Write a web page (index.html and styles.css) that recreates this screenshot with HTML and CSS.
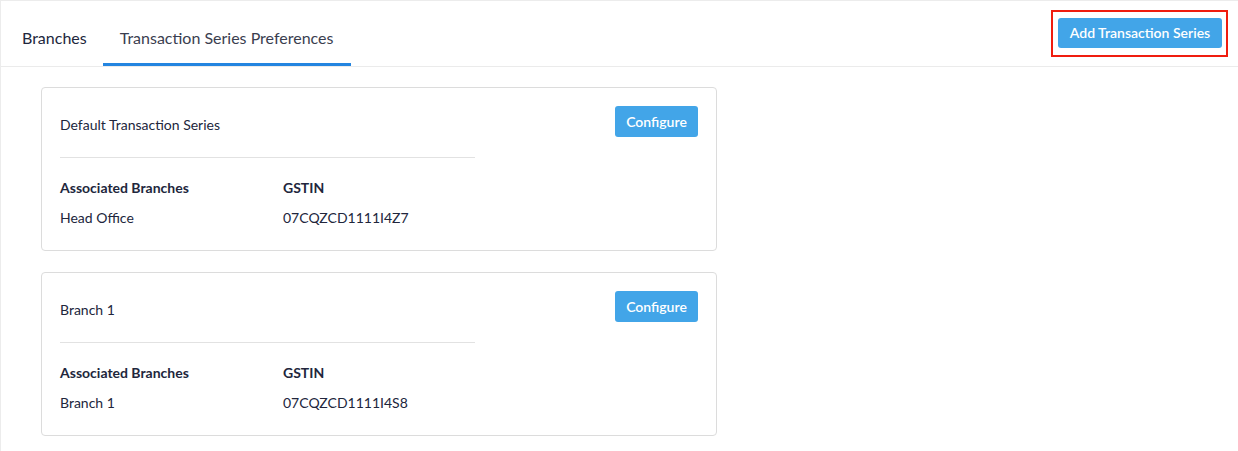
FILE: index.html
```html
<!DOCTYPE html>
<html>
<head>
<meta charset="utf-8">
<link rel="stylesheet" href="styles.css">
</head>
<body>
<div class="page">
  <div class="header">
    <div class="tabs">
      <div class="tab">Branches</div>
      <div class="tab active">Transaction Series Preferences</div>
    </div>
    <div class="highlight">
      <button class="btn btn-add">Add Transaction Series</button>
    </div>
  </div>
  <div class="content">
    <div class="card">
      <div class="card-top">
        <div class="card-title">Default Transaction Series</div>
        <button class="btn btn-config">Configure</button>
      </div>
      <div class="divider"></div>
      <div class="grid">
        <div class="th">Associated Branches</div>
        <div class="th">GSTIN</div>
        <div class="td">Head Office</div>
        <div class="td">07CQZCD1111I4Z7</div>
      </div>
    </div>
    <div class="card">
      <div class="card-top">
        <div class="card-title">Branch 1</div>
        <button class="btn btn-config">Configure</button>
      </div>
      <div class="divider"></div>
      <div class="grid">
        <div class="th">Associated Branches</div>
        <div class="th">GSTIN</div>
        <div class="td">Branch 1</div>
        <div class="td">07CQZCD1111I4S8</div>
      </div>
    </div>
  </div>
</div>
</body>
</html>
```

FILE: styles.css
```css
* { box-sizing: border-box; }
html, body { margin: 0; padding: 0; background: #fff; }
body {
  font-family: "Lato", "Open Sans", sans-serif;
  color: #21263c;
  width: 1238px;
  height: 451px;
  overflow: hidden;
}
.page {
  border-top: 1px solid #ececec;
  border-left: 1px solid #ececec;
  height: 451px;
}
.header {
  height: 66px;
  border-bottom: 1px solid #ebebeb;
  display: flex;
  justify-content: space-between;
  align-items: flex-start;
  padding-left: 5px;
  padding-right: 10px;
}
.tabs {
  display: flex;
  height: 65px;
}
.tab {
  font-size: 16px;
  padding: 0 16px;
  display: flex;
  align-items: center;
  padding-top: 11px;
  color: #21263c;
  border-bottom: 3px solid transparent;
}
.tab.active {
  padding-left: 17px;
  padding-right: 17px;
  border-bottom-color: #2485e0;
  color: #3a3e4f;
}
.highlight {
  margin-top: 9px;
  border: 2px solid #f01d0f;
  padding: 6px 4px 7px 5px;
}
.btn {
  font-family: inherit;
  background: #42a5e8;
  color: #fff;
  border: none;
  border-radius: 3px;
  font-size: 14px;
  font-weight: 600;
  cursor: pointer;
}
.btn-add {
  width: 164px;
  height: 30px;
  display: block;
  padding-bottom: 2px;
}
.content {
  padding: 20px 0 0 40px;
  display: flex;
  flex-direction: column;
  gap: 21px;
}
.card {
  width: 676px;
  height: 164px;
  border: 1px solid #dcdcdc;
  border-radius: 4px;
  padding: 18px 18px 0 18px;
}
.card-top {
  display: flex;
  justify-content: space-between;
  align-items: flex-start;
  height: 51px;
}
.card-title {
  font-size: 14px;
  margin-top: 10px;
}
.btn-config {
  width: 83px;
  height: 31px;
}
.divider {
  width: 415px;
  height: 1px;
  background: #e2e2e2;
}
.grid {
  display: grid;
  grid-template-columns: 223px 200px;
  grid-auto-rows: 30px;
  padding-top: 21px;
  font-size: 14px;
}
.th { font-weight: 700; }
```
